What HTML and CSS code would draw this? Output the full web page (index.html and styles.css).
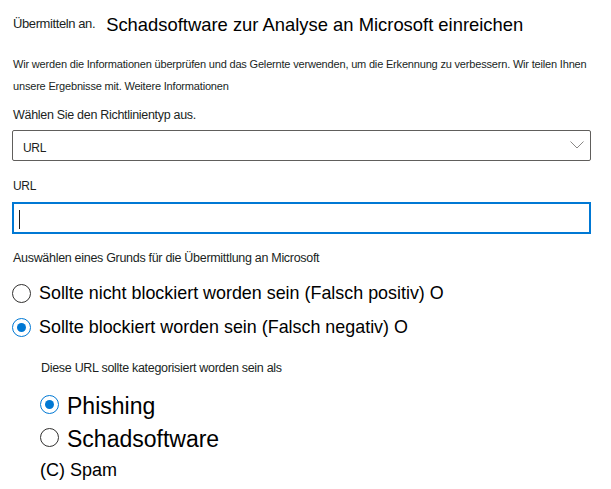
FILE: index.html
```html
<!DOCTYPE html>
<html lang="de">
<head>
<meta charset="utf-8">
<link rel="stylesheet" href="styles.css">
</head>
<body>
<div class="page">
  <div class="header"><span class="pre">Übermitteln an.</span><span class="title">Schadsoftware zur Analyse an Microsoft einreichen</span></div>
  <p class="desc">Wir werden die Informationen überprüfen und das Gelernte verwenden, um die Erkennung zu verbessern. Wir teilen Ihnen unsere Ergebnisse mit. Weitere Informationen</p>

  <div class="label first">Wählen Sie den Richtlinientyp aus.</div>
  <div class="select">
    <span class="select-value">URL</span>
    <svg class="chevron" width="14" height="8" viewBox="0 0 14 8"><path d="M0.5 0.5 L7 7 L13.5 0.5" fill="none" stroke="#8a8886" stroke-width="1"/></svg>
  </div>

  <div class="label url-label">URL</div>
  <div class="input"><span class="caret"></span></div>

  <div class="label reason">Auswählen eines Grunds für die Übermittlung an Microsoft</div>
  <div class="options">
    <div class="option"><span class="radio"></span><span class="opt-text">Sollte nicht blockiert worden sein (Falsch positiv) O</span></div>
    <div class="option"><span class="radio checked"></span><span class="opt-text">Sollte blockiert worden sein (Falsch negativ) O</span></div>
  </div>

  <div class="sub">
    <div class="label sublabel">Diese URL sollte kategorisiert worden sein als</div>
    <div class="option big"><span class="radio checked"></span><span class="opt-text">Phishing</span></div>
    <div class="option big"><span class="radio"></span><span class="opt-text">Schadsoftware</span></div>
    <div class="spam">(C) Spam</div>
  </div>
</div>
</body>
</html>
```

FILE: styles.css
```css
html, body {
  margin: 0;
  padding: 0;
  background: #ffffff;
}
body {
  font-family: "Liberation Sans", Arial, sans-serif;
  color: #201f1e;
}
.page {
  padding: 10px 20px 0 12px;
}
.header {
  display: block;
  height: 28px;
  line-height: 28px;
  white-space: nowrap;
}
.pre {
  font-size: 13px;
  letter-spacing: -0.4px;
  margin-left: 1px;
  vertical-align: 3px;
}
.title {
  font-size: 18.4px;
  margin-left: 11px;
  color: #000;
}
.desc {
  margin: 15px 0 0 1px;
  font-size: 11px;
  line-height: 22px;
  letter-spacing: -0.18px;
  color: #201f1e;
}
.label {
  font-size: 12.5px;
  letter-spacing: -0.3px;
  line-height: 15px;
}
.label.first {
  margin: 11px 0 0 1px;
}
.select {
  margin-top: 7px;
  height: 31px;
  box-sizing: border-box;
  border: 1px solid #605e5c;
  border-radius: 2px;
  display: flex;
  align-items: center;
  justify-content: space-between;
  padding: 0 6px 0 10px;
}
.select-value {
  font-size: 12px;
  letter-spacing: -0.3px;
  margin-top: 4px;
}
.chevron {
  margin-top: -1px;
}
.label.url-label {
  margin: 18px 0 0 1px;
  font-size: 12px;
}
.input {
  margin-top: 8px;
  height: 32px;
  box-sizing: border-box;
  border: 2px solid #0078d4;
  display: flex;
  align-items: center;
  padding-left: 5px;
}
.caret {
  display: block;
  width: 1px;
  height: 19px;
  background: #201f1e;
  margin-top: 3px;
}
.label.reason {
  margin: 17px 0 0 1px;
}
.options {
  margin-top: 18px;
  display: flex;
  flex-direction: column;
  gap: 15px;
}
.option {
  display: flex;
  align-items: center;
  gap: 8px;
  height: 19px;
}
.opt-text {
  font-size: 17.9px;
  color: #000;
}
.radio {
  display: block;
  width: 19px;
  height: 19px;
  box-sizing: border-box;
  border: 1px solid #323130;
  border-radius: 50%;
  flex: none;
  position: relative;
}
.radio.checked {
  border-color: #0078d4;
}
.radio.checked::after {
  content: "";
  position: absolute;
  left: 4px;
  top: 4px;
  width: 9px;
  height: 9px;
  border-radius: 50%;
  background: #0078d4;
}
.sub {
  margin: 24px 0 0 28px;
}
.label.sublabel {
  margin: 0 0 0 1px;
}
.sub .option.big {
  margin-top: 14px;
  height: 19px;
}
.sub .sublabel + .option.big {
  margin-top: 19px;
}
.sub .option.big .opt-text {
  font-size: 23px;
  margin-top: 3px;
}
.spam {
  font-size: 18px;
  color: #000;
  margin-top: 13px;
}
```
